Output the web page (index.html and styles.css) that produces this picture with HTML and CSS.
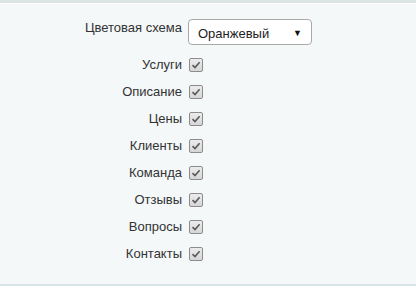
FILE: index.html
```html
<!DOCTYPE html>
<html lang="ru">
<head>
<meta charset="utf-8">
<link rel="stylesheet" href="styles.css">
</head>
<body>
<div class="panel">
  <div class="form">
    <div class="label top">Цветовая схема</div>
    <div class="ctrl top"><div class="select"><span>Оранжевый</span><span class="arrow">▼</span></div></div>

    <div class="label row">Услуги</div>
    <div class="ctrl row"><span class="cb"><svg viewBox="0 0 14 14" width="14" height="14"><path d="M3.5 7.2 L6 9.6 L10.6 4.2" fill="none" stroke="#5a5a5a" stroke-width="1.6"/></svg></span></div>

    <div class="label row">Описание</div>
    <div class="ctrl row"><span class="cb"><svg viewBox="0 0 14 14" width="14" height="14"><path d="M3.5 7.2 L6 9.6 L10.6 4.2" fill="none" stroke="#5a5a5a" stroke-width="1.6"/></svg></span></div>

    <div class="label row">Цены</div>
    <div class="ctrl row"><span class="cb"><svg viewBox="0 0 14 14" width="14" height="14"><path d="M3.5 7.2 L6 9.6 L10.6 4.2" fill="none" stroke="#5a5a5a" stroke-width="1.6"/></svg></span></div>

    <div class="label row">Клиенты</div>
    <div class="ctrl row"><span class="cb"><svg viewBox="0 0 14 14" width="14" height="14"><path d="M3.5 7.2 L6 9.6 L10.6 4.2" fill="none" stroke="#5a5a5a" stroke-width="1.6"/></svg></span></div>

    <div class="label row">Команда</div>
    <div class="ctrl row"><span class="cb"><svg viewBox="0 0 14 14" width="14" height="14"><path d="M3.5 7.2 L6 9.6 L10.6 4.2" fill="none" stroke="#5a5a5a" stroke-width="1.6"/></svg></span></div>

    <div class="label row">Отзывы</div>
    <div class="ctrl row"><span class="cb"><svg viewBox="0 0 14 14" width="14" height="14"><path d="M3.5 7.2 L6 9.6 L10.6 4.2" fill="none" stroke="#5a5a5a" stroke-width="1.6"/></svg></span></div>

    <div class="label row">Вопросы</div>
    <div class="ctrl row"><span class="cb"><svg viewBox="0 0 14 14" width="14" height="14"><path d="M3.5 7.2 L6 9.6 L10.6 4.2" fill="none" stroke="#5a5a5a" stroke-width="1.6"/></svg></span></div>

    <div class="label row">Контакты</div>
    <div class="ctrl row"><span class="cb"><svg viewBox="0 0 14 14" width="14" height="14"><path d="M3.5 7.2 L6 9.6 L10.6 4.2" fill="none" stroke="#5a5a5a" stroke-width="1.6"/></svg></span></div>
  </div>
</div>
</body>
</html>
```
FILE: styles.css
```css
html, body {
  margin: 0;
  padding: 0;
  background: #ffffff;
}
body {
  font-family: "Liberation Sans", Arial, sans-serif;
  font-size: 13px;
  color: #333333;
  width: 416px;
  height: 300px;
  overflow: hidden;
}
.panel {
  border-top: 3px solid #dde4e6;
  border-bottom: 2px solid #d6e5ea;
  box-shadow: inset 0 1px 0 #ffffff;
  background: #f4f8f9;
  height: 281px;
  box-sizing: content-box;
}
.form {
  display: grid;
  grid-template-columns: 182px 124px;
  column-gap: 6px;
  padding-top: 16px;
}
.label {
  text-align: right;
  display: flex;
  align-items: center;
  justify-content: flex-end;
  line-height: 15px;
}
.label.top {
  align-items: flex-start;
  padding-top: 1px;
}
.ctrl {
  display: flex;
  align-items: center;
}
.ctrl.top {
  margin-bottom: 6px;
}
.row {
  height: 27px;
}
.select {
  box-sizing: border-box;
  width: 124px;
  height: 26px;
  border: 1px solid #a9a9a9;
  border-radius: 4px;
  background: #ffffff;
  display: flex;
  align-items: center;
  justify-content: space-between;
  padding: 3px 9px 0 9px;
  color: #222222;
}
.arrow {
  font-size: 9px;
  color: #111111;
  margin-top: -2px;
}
.cb {
  box-sizing: border-box;
  width: 14px;
  height: 14px;
  margin-left: 1px;
  border: 1px solid #8c8c8c;
  border-radius: 2px;
  background: linear-gradient(#ececec, #d6d6d6);
  display: flex;
  align-items: center;
  justify-content: center;
  overflow: hidden;
}
.cb svg {
  display: block;
  flex: none;
}
```
